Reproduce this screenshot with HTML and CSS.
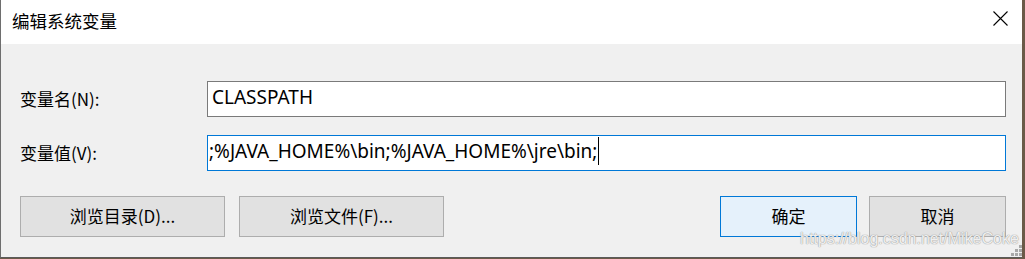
FILE: index.html
```html
<!DOCTYPE html>
<html lang="zh-CN">
<head>
    <meta charset="UTF-8">
    <title>编辑系统变量</title>
    <link rel="stylesheet" href="styles.css">
</head>
<body>

    <div class="dialog">
        <!-- Title bar -->
        <div class="titlebar">
            <span class="title">编辑系统变量</span>
            <svg class="close" width="15" height="15" viewBox="0 0 15 15">
                <path d="M0.5 0.5 L14.5 14.5 M14.5 0.5 L0.5 14.5" stroke="#000" stroke-width="1.1" fill="none"/>
            </svg>
        </div>

        <div class="content">
            <div class="form-grid">
                <label class="label">变量名(N):</label>
                <div class="field">CLASSPATH</div>

                <label class="label">变量值(V):</label>
                <div class="field focused">;%JAVA_HOME%\bin;%JAVA_HOME%\jre\bin;<span class="caret"></span></div>
            </div>

            <div class="buttons">
                <div class="btn-group">
                    <button class="btn wide">浏览目录(D)...</button>
                    <button class="btn wide">浏览文件(F)...</button>
                </div>
                <div class="btn-group right">
                    <button class="btn primary">确定</button>
                    <button class="btn">取消</button>
                </div>
            </div>
        </div>

        <div class="watermark">https://blog.csdn.net/MikeCoke</div>
        <div class="grip">
            <i style="left:8px;top:0"></i>
            <i style="left:4px;top:4px"></i><i style="left:8px;top:4px"></i>
            <i style="left:0;top:8px"></i><i style="left:4px;top:8px"></i><i style="left:8px;top:8px"></i>
        </div>
    </div>

</body>
</html>
```

FILE: styles.css
```css
body {
    margin: 0;
    padding: 0;
    background-color: #6b5a48;
    font-family: "Noto Sans", "Noto Sans CJK SC", sans-serif;
    font-size: 17px;
    color: #000;
}
.dialog {
    position: relative;
    width: 1021px;
    height: 257px;
    border-left: 1px solid #6e6e6e;
    border-bottom: 1px solid #5a5a5a;
    background-color: #f0f0f0;
    overflow: hidden;
}
.titlebar {
    height: 44px;
    background: #fff;
    display: flex;
    align-items: center;
    justify-content: space-between;
    padding: 0 14px 0 11px;
}
.title {
    font-family: "Noto Sans CJK SC", sans-serif;
    font-size: 17.5px;
    margin-top: -3px;
}
.close {
    display: block;
    margin-top: -7px;
}
.content {
    padding: 37px 16px 0 19px;
}
.form-grid {
    display: grid;
    grid-template-columns: 187px 1fr;
    row-gap: 18px;
    align-items: center;
}
.label {
    font-family: "Noto Sans CJK SC", sans-serif;
    font-size: 17px;
    margin-top: -2px;
}
.field {
    height: 34px;
    border: 1px solid #7a7a7a;
    background: #fff;
    padding: 0 4px;
    line-height: 31px;
    font-size: 19px;
    white-space: nowrap;
}
.field.focused {
    border-color: #0078d7;
    padding-left: 1px;
}
.caret {
    display: inline-block;
    width: 1px;
    height: 28px;
    background: #000;
    vertical-align: -7px;
    margin-left: 1px;
}
.buttons {
    display: flex;
    justify-content: space-between;
    margin-top: 25px;
}
.btn-group {
    display: flex;
    gap: 14px;
}
.btn-group.right {
    gap: 12px;
}
.btn {
    width: 137px;
    height: 41px;
    border: 1px solid #adadad;
    background-color: #e1e1e1;
    font-family: "Noto Sans CJK SC", sans-serif;
    font-size: 17px;
    color: #000;
    padding: 0 0 3px 0;
    margin: 0;
}
.btn.wide {
    width: 205px;
}
.btn.primary {
    background-color: #e5f1fb;
    border-color: #0078d7;
}
.watermark {
    position: absolute;
    left: 799px;
    top: 230px;
    font-family: "Liberation Sans", Arial, sans-serif;
    font-size: 16px;
    white-space: nowrap;
    color: rgba(255, 255, 255, 0.85);
    text-shadow: 0 0 1px #9a9a9a, 0 0 1px #9a9a9a;
}
.grip {
    position: absolute;
    left: 1010px;
    top: 245px;
    width: 11px;
    height: 11px;
}
.grip i {
    position: absolute;
    width: 3px;
    height: 3px;
    background: #a8a8a8;
}
```
